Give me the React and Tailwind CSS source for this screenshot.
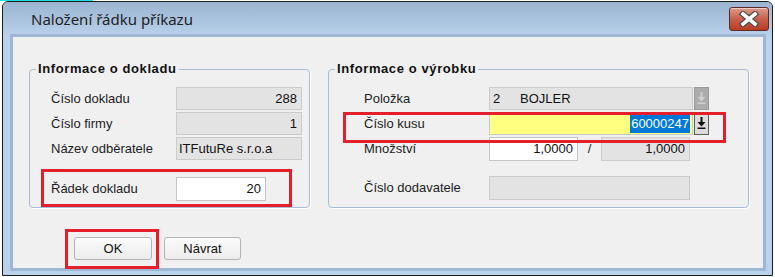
import React from 'react';

const font = { fontFamily: '"Liberation Sans", Arial, sans-serif' };

function DropArrow({ disabled }) {
  const c = disabled ? '#cfcfcf' : '#111111';
  return (
    <svg width="9" height="13" viewBox="0 0 9 13">
      <rect x="3.5" y="0" width="2" height="5" fill={c} />
      <polygon points="0.5,5 8.5,5 4.5,9.5" fill={c} />
      <rect x="0.5" y="10.5" width="8" height="1.5" fill={c} />
    </svg>
  );
}

function PickButton({ disabled }) {
  return (
    <div
      className={
        disabled
          ? 'ml-px w-[15px] h-[23px] flex items-center justify-center bg-[#acacac] border border-[#9a9a9a]'
          : 'ml-px w-[15px] h-[23px] flex items-center justify-center bg-[#dcdcdc] border border-[#5f5f5f]'
      }
    >
      <DropArrow disabled={disabled} />
    </div>
  );
}

function Row({ label, children, className = '' }) {
  return (
    <div className={`flex items-center h-[23px] ${className}`}>
      <div className="w-[125px] shrink-0 text-[13px] text-[#1c1c24]">{label}</div>
      {children}
    </div>
  );
}

function GroupBox({ title, className, children }) {
  return (
    <div className={`relative border border-[#a7bdd6] rounded-[4px] shadow-[1px_1px_0_#ffffff] ${className}`}>
      <span className="absolute left-[6px] top-[-9px] bg-[#f0f0f0] px-[2px] text-[13px] font-bold tracking-[0.6px] text-[#111] leading-[16px]">
        {title}
      </span>
      {children}
    </div>
  );
}

export default function App() {
  return (
    <div className="relative w-[775px] h-[277px] bg-white overflow-hidden" style={font}>
      <div className="absolute left-0 top-0 w-[93px] h-px bg-[#19e0e0]" />
      <div className="ml-[2px] mt-px w-[771px] h-[275px] border border-[#1b1b1b] rounded-t-[6px] bg-[#b9d1ea] flex flex-col">
        {/* title bar */}
        <div className="h-[32px] shrink-0 flex items-start rounded-t-[5px] bg-gradient-to-b from-[#9bb4d1] to-[#b7cfe8]">
          <div
            className="ml-[28px] mt-[6px] text-[15px] text-[#1e1e1e] flex-1"
            style={{ fontFamily: '"Noto Sans", "Open Sans", sans-serif' }}
          >
            Naložení řádku příkazu
          </div>
          <div className="mt-[5px] mr-[3px] w-[40px] h-[24px] rounded-[3px] border border-[#5d2a24] bg-gradient-to-b from-[#dd9a8c] via-[#c9604a] to-[#b83a22] flex items-center justify-center shadow-[inset_0_1px_0_rgba(255,255,255,0.5)]">
            <svg width="22" height="16" viewBox="0 0 22 16">
              <path d="M5 3 L17 13 M17 3 L5 13" stroke="#4a4a4a" strokeWidth="6" strokeLinecap="square" />
              <path d="M5 3 L17 13 M17 3 L5 13" stroke="#ffffff" strokeWidth="3.6" strokeLinecap="square" />
            </svg>
          </div>
        </div>

        {/* client area */}
        <div className="ml-[7px] mr-[6px] w-[756px] h-[237px] border-[3px] border-[#9db7d4] bg-[#f0f0f0]">
          <div className="relative w-[750px] h-[231px] pl-[16px] pt-[32px] flex flex-col">
            <div className="flex">
              <GroupBox title="Informace o dokladu" className="w-[281px] h-[139px] pt-[17px] pl-[21px]">
                <div className="flex flex-col gap-[2px]">
                  <Row label="Číslo dokladu">
                    <div className="w-[126px] h-[23px] bg-[#e3e3e3] border border-[#cbcbcb] text-[13px] text-right pr-[4px] leading-[21px] text-[#111]">
                      288
                    </div>
                  </Row>
                  <Row label="Číslo firmy">
                    <div className="w-[126px] h-[23px] bg-[#e3e3e3] border border-[#cbcbcb] text-[13px] text-right pr-[4px] leading-[21px] text-[#111]">
                      1
                    </div>
                  </Row>
                  <Row label="Název odběratele">
                    <div className="w-[126px] h-[23px] bg-[#e3e3e3] border border-[#cbcbcb] text-[13px] pl-[2px] leading-[21px] text-[#111]">
                      ITFutuRe s.r.o.a
                    </div>
                  </Row>
                  <Row label="Řádek dokladu" className="mt-[15px] h-[24px]">
                    <div className="w-[90px] h-[24px] bg-white border border-[#c4c4c4] text-[13px] text-right pr-[4px] leading-[22px] text-[#111]">
                      20
                    </div>
                  </Row>
                </div>
                <div className="absolute left-[11px] top-[99px] w-[251px] h-[38px] border-[3px] border-[#e41e2a]" />
              </GroupBox>

              <GroupBox title="Informace o výrobku" className="ml-[18px] w-[421px] h-[139px] pt-[17px] pl-[35px]">
                <div className="flex flex-col gap-[2px]">
                  <Row label="Položka">
                    <div className="w-[204px] h-[23px] bg-[#e3e3e3] border border-[#cbcbcb] text-[13px] leading-[21px] text-[#111] flex">
                      <span className="pl-[3px] w-[30px]">2</span>
                      <span>BOJLER</span>
                    </div>
                    <PickButton disabled />
                  </Row>
                  <Row label="Číslo kusu">
                    <div className="w-[204px] h-[23px] bg-[#ffff80] border border-[#c9c9c9] text-[13px] leading-[21px] flex justify-end items-center pr-[2px]">
                      <span className="bg-[#0078d7] text-white leading-[18px] px-px">60000247</span>
                    </div>
                    <PickButton />
                  </Row>
                  <Row label="Množství" className="h-[24px]">
                    <div className="w-[89px] h-[24px] bg-white border border-[#c4c4c4] text-[13px] text-right pr-[4px] leading-[22px] text-[#111]">
                      1,0000
                    </div>
                    <span className="w-[23px] text-center text-[13px] text-[#222]">/</span>
                    <div className="w-[89px] h-[24px] bg-[#e3e3e3] border border-[#cbcbcb] text-[13px] text-right pr-[4px] leading-[22px] text-[#111]">
                      1,0000
                    </div>
                  </Row>
                  <Row label="Číslo dodavatele" className="mt-[13px] h-[24px]">
                    <div className="w-[201px] h-[24px] bg-[#e3e3e3] border border-[#cbcbcb]" />
                  </Row>
                </div>
                <div className="absolute left-[14px] top-[42px] w-[383px] h-[31px] border-[3px] border-[#e41e2a]" />
              </GroupBox>
            </div>

            {/* buttons */}
            <div className="relative flex gap-[12px] ml-[45px] mt-[29px]">
              <button className="w-[78px] h-[23px] rounded-[3px] border border-[#b3b3b3] bg-gradient-to-b from-[#fbfbfb] to-[#ececec] text-[13px] text-[#111]">
                OK
              </button>
              <button className="w-[77px] h-[23px] rounded-[3px] border border-[#b3b3b3] bg-gradient-to-b from-[#fbfbfb] to-[#ececec] text-[13px] text-[#111]">
                Návrat
              </button>
              <div className="absolute left-[-9px] top-[-8px] w-[94px] h-[40px] border-[3px] border-[#e41e2a]" />
            </div>
          </div>
        </div>
      </div>
    </div>
  );
}
